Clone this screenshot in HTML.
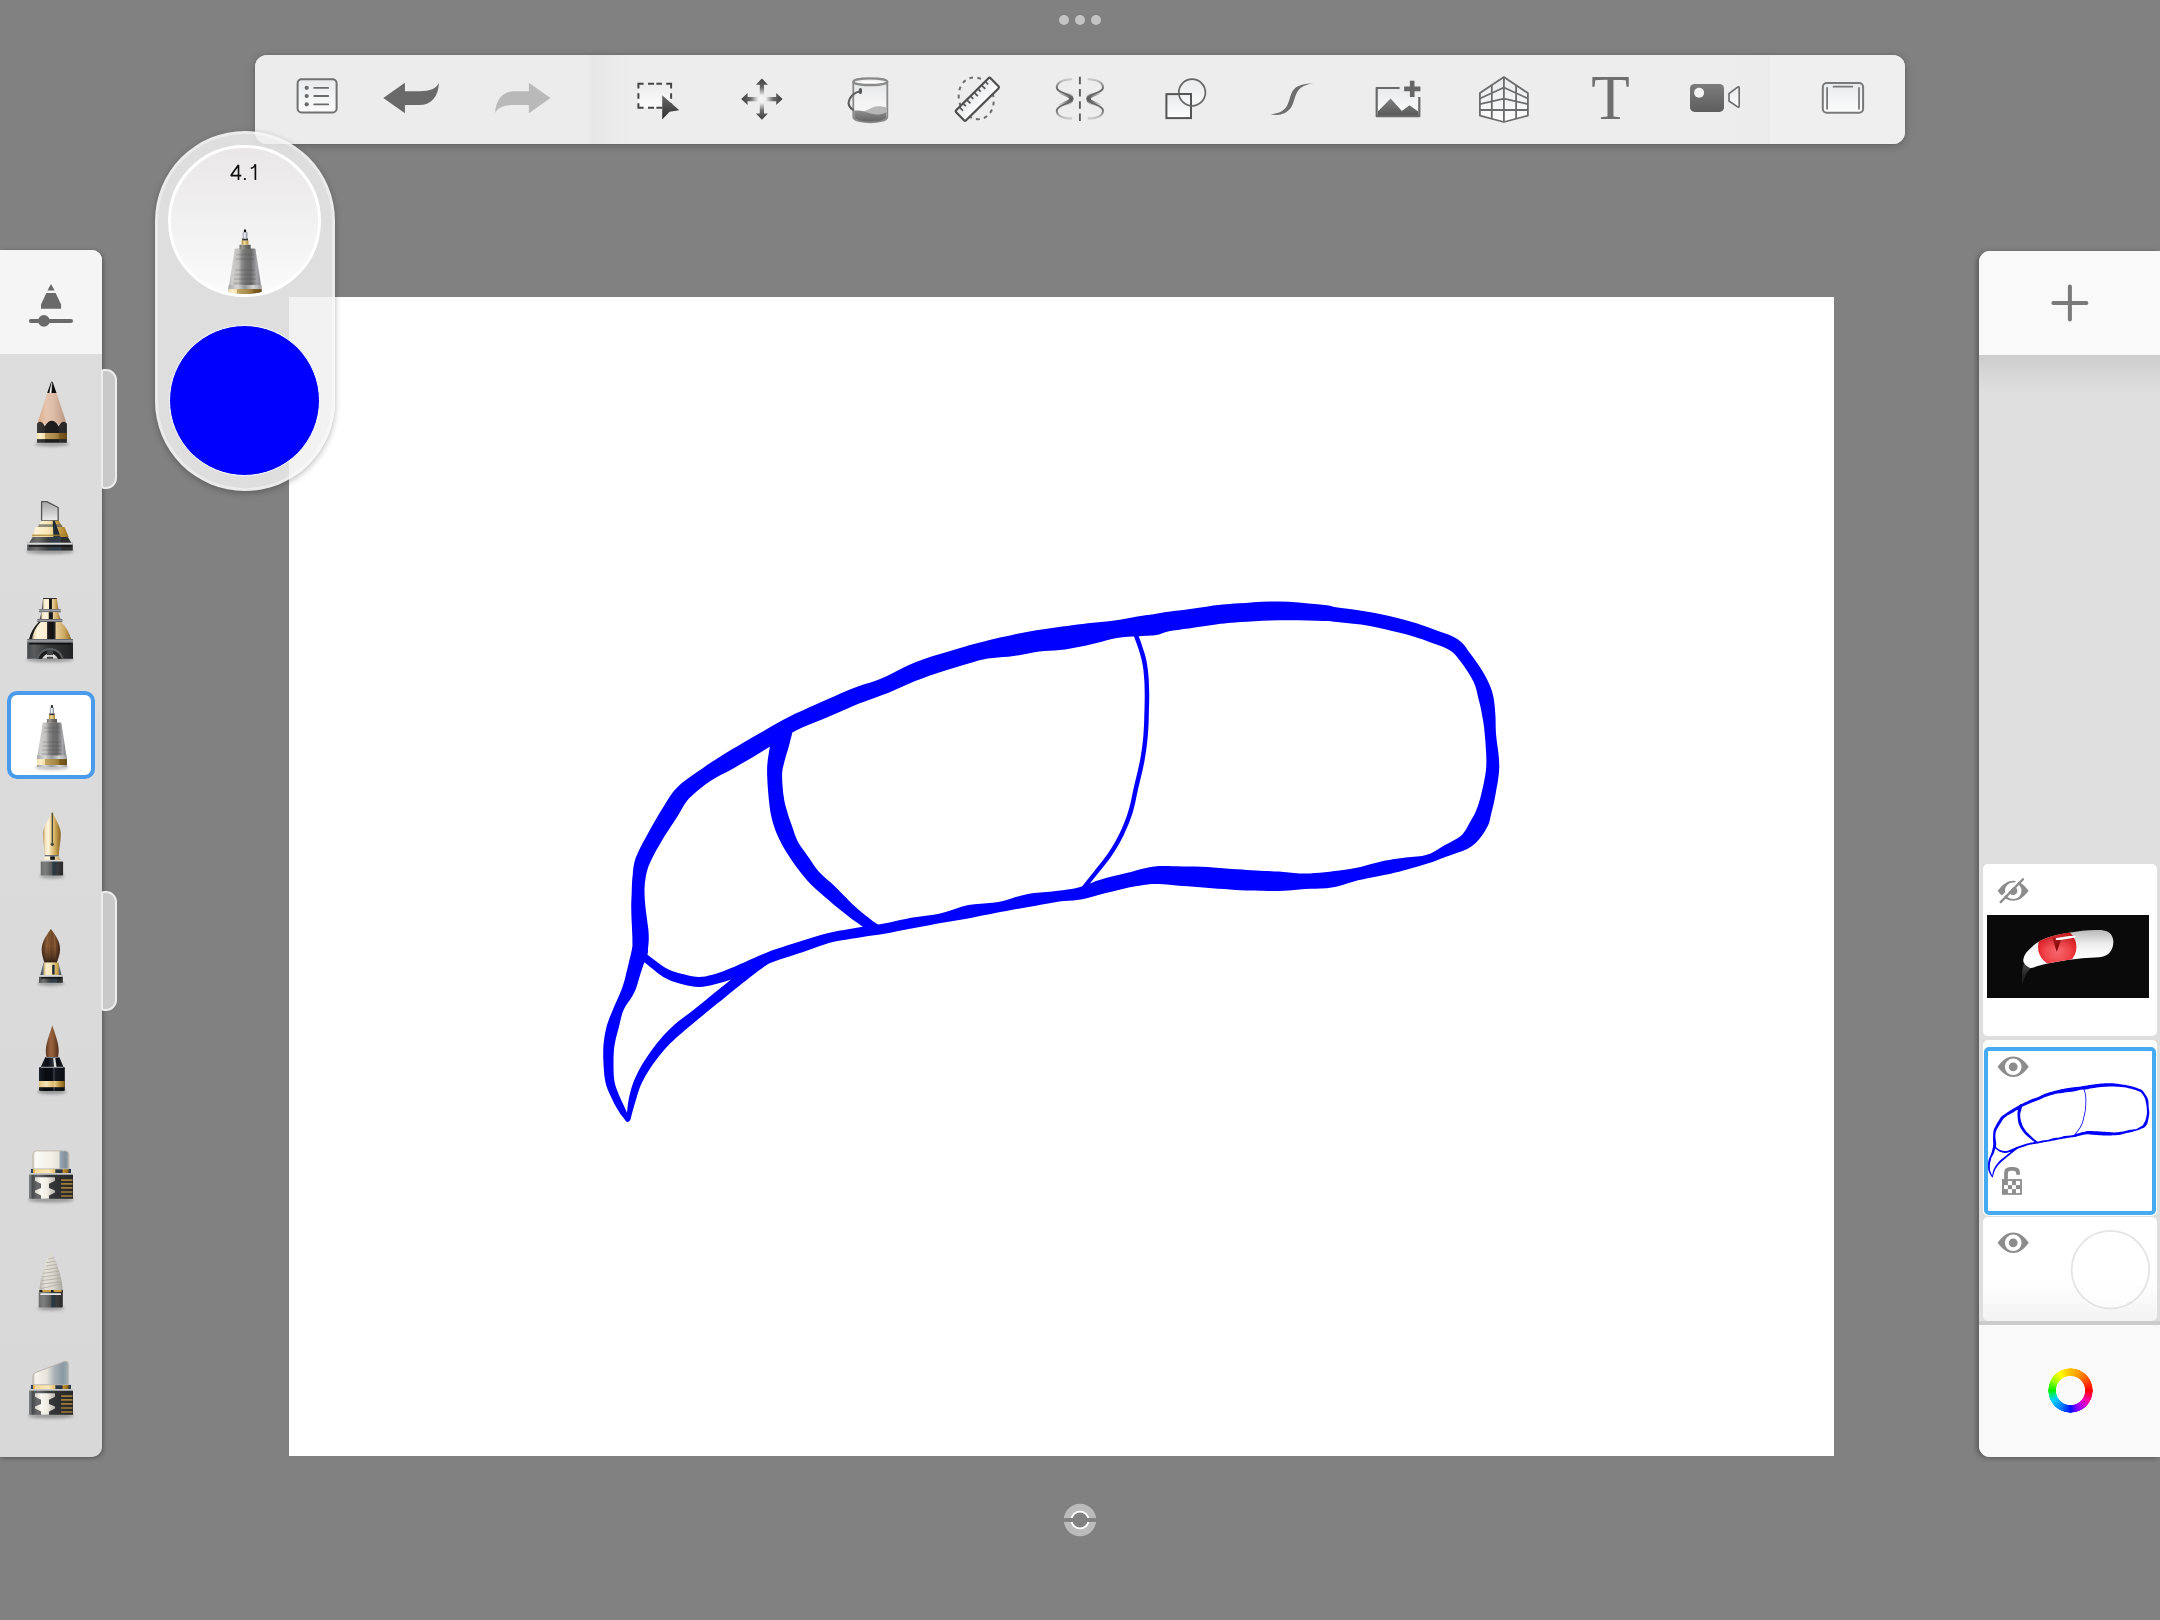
<!DOCTYPE html>
<html><head><meta charset="utf-8"><title>Sketchbook</title>
<style>
html,body{margin:0;padding:0;overflow:hidden}
body{width:2160px;height:1620px;background:#818181;position:relative;overflow:hidden;font-family:"Liberation Sans",sans-serif}
.abs{position:absolute}
#canvas{left:289.2px;top:296.8px;width:1545.3px;height:1159.2px;background:#fff}
#lp{left:0;top:250px;width:102.4px;height:1207px;background:#dcdcdc;border-radius:0 10px 10px 0;box-shadow:1px 1px 4px rgba(0,0,0,.35);background:linear-gradient(#dddddd,#d8d8d8)}
#lptop{left:0;top:250px;width:102.4px;height:104px;background:#f5f5f5;border-radius:0 10px 0 0}
.tab{left:101.3px;width:16px;height:120.2px;background:#c9c9c9;border:2px solid #ececec;border-radius:3px 11px 11px 3px;box-sizing:border-box}
#sel{left:7.1px;top:690.9px;width:88px;height:88.1px;box-sizing:border-box;border:4px solid #4a9bec;border-radius:10px;background:#fff}
#rp{left:1979px;top:250.5px;width:181px;height:1206.5px;background:#dedede;border-radius:11px 0 0 11px;box-shadow:-2px 1px 5px rgba(0,0,0,.32)}
#rptop{left:1979px;top:250.5px;width:181px;height:104px;background:#f9f9f9;border-radius:11px 0 0 0}
#rpgrad{left:1979px;top:354.5px;width:181px;height:36px;background:linear-gradient(#cdcdcd,#dedede)}
#rpbot{left:1979px;top:1325px;width:181px;height:132px;background:#f9f9f9;border-radius:0 0 0 11px}
#rpline{left:1979px;top:1321px;width:181px;height:4px;background:#cbcbcb}
.tile{left:1983px;width:174px;background:#fff;border-radius:5px}
#puck{left:154.8px;top:130.6px;width:180.4px;height:360.4px;border-radius:90.2px;background:rgba(240,240,240,.84);box-sizing:border-box;border:3px solid rgba(255,255,255,.4);box-shadow:0 2px 6px rgba(0,0,0,.28)}
#pc1{left:168.3px;top:144.5px;width:152.7px;height:152.7px;border-radius:50%;box-sizing:border-box;border:3px solid #fff;background:linear-gradient(#e9e7e7,#fbfbfb);overflow:hidden}
#pc2{left:169.4px;top:325.4px;width:151px;height:151px;border-radius:50%;box-sizing:border-box;border:1.5px solid #fff;background:#0000ff}
#ptxt{left:194.6px;top:160px;width:100px;text-align:center;font-size:20px;line-height:24px;color:transparent;letter-spacing:.3px}
#tb{left:255px;top:55px;width:1650px;height:88.7px;border-radius:12px;background:#ececec;box-shadow:0 2px 9px rgba(0,0,0,.22),0 0 2px rgba(0,0,0,.15);overflow:hidden}
#tbl{left:0;top:0;width:335px;height:100%;background:#ececec}
#tbm{left:335px;top:0;width:1180px;height:100%;background:linear-gradient(90deg,#e7e7e7 0,#ededed 42px,#ededed calc(100% - 45px),#ebebeb 100%)}
#tbr{left:1515px;top:0;width:135px;height:100%;background:#efefef}
#wheel{left:2047.5px;top:1368.4px;width:45px;height:45px;border-radius:50%;background:conic-gradient(from 90deg,#ff0000,#ff00a0 8.3%,#c400e0 13.9%,#8000ff 19.4%,#0010ff 25%,#0080ff 33.3%,#00d0ff 41.7%,#00e890 45.8%,#00f000 50%,#a0ff00 58.3%,#ffff00 66%,#ffc800 73.6%,#ff9000 83.3%,#ff4a00 91.7%,#ff0000);-webkit-mask:radial-gradient(circle,transparent 14.2px,#000 14.9px,#000 22px,transparent 22.6px);mask:radial-gradient(circle,transparent 14.2px,#000 14.9px,#000 22px,transparent 22.6px)}
svg{position:absolute;left:0;top:0}
</style></head><body>
<div id="canvas" class="abs"></div>
<svg width="2160" height="1620" viewBox="0 0 2160 1620"><g id="dr" fill="#0000ff"><path d="M647.5 953.3 L647.7 951.1 L648.1 947.8 L648.5 943.8 L648.8 939.4 L648.7 934.7 L648.4 929.8 L647.7 924.5 L647.0 919.1 L646.3 914.1 L645.7 909.6 L645.3 905.6 L645.0 901.9 L644.7 898.6 L644.6 895.3 L644.5 892.0 L644.5 888.8 L644.7 885.7 L644.9 882.8 L645.3 879.9 L645.7 877.0 L646.3 874.0 L646.9 871.4 L647.6 868.9 L648.5 866.3 L649.8 863.2 L651.5 859.4 L653.8 855.0 L656.3 850.3 L659.1 845.4 L661.8 840.7 L664.6 836.1 L667.6 831.4 L670.7 826.7 L673.8 822.1 L676.8 817.6 L679.5 813.1 L681.8 809.0 L683.9 805.3 L686.2 801.9 L688.9 798.6 L692.4 795.2 L696.6 791.5 L701.2 787.8 L706.0 784.1 L710.8 780.8 L715.3 778.0 L719.7 775.6 L724.2 773.2 L729.2 770.7 L734.5 767.7 L740.4 764.3 L746.6 760.7 L753.1 756.9 L759.6 753.0 L766.0 749.1 L772.3 745.2 L778.5 741.2 L784.6 737.3 L790.6 733.6 L796.6 730.3 L802.7 727.3 L808.8 724.7 L815.1 722.2 L821.4 719.8 L827.9 717.1 L834.3 714.3 L840.7 711.5 L847.0 708.7 L853.2 706.0 L859.1 703.6 L864.7 701.4 L870.2 699.4 L875.7 697.4 L881.6 695.3 L888.0 692.9 L894.7 690.1 L901.5 687.1 L908.3 684.1 L915.2 681.1 L922.2 678.4 L930.0 675.6 L938.4 672.8 L947.0 670.1 L955.2 667.5 L962.5 665.3 L968.6 663.4 L973.8 661.9 L978.4 660.6 L983.0 659.6 L987.7 658.6 L992.7 657.9 L997.8 657.4 L1003.0 657.1 L1008.3 656.7 L1013.7 656.0 L1019.1 655.2 L1024.3 654.2 L1029.4 653.2 L1034.5 652.2 L1039.4 651.5 L1044.3 651.0 L1049.3 650.7 L1054.5 650.4 L1059.8 650.0 L1065.2 649.4 L1070.6 648.6 L1075.9 647.6 L1081.1 646.6 L1086.3 645.5 L1091.4 644.3 L1096.6 643.1 L1101.7 641.7 L1106.8 640.3 L1111.9 639.0 L1116.9 638.0 L1122.2 637.3 L1127.7 636.8 L1133.2 636.5 L1138.3 636.2 L1142.6 635.9 L1145.9 635.8 L1148.4 635.7 L1150.7 635.6 L1153.3 635.5 L1156.2 635.0 L1159.1 634.4 L1161.6 633.6 L1163.8 632.8 L1166.0 632.0 L1169.0 631.3 L1173.1 630.6 L1178.1 629.9 L1183.5 629.1 L1189.1 628.4 L1194.6 627.6 L1200.0 626.8 L1205.4 626.0 L1210.7 625.2 L1215.7 624.4 L1220.4 623.8 L1224.5 623.4 L1227.9 623.0 L1231.3 622.7 L1235.4 622.4 L1240.6 622.1 L1247.2 621.7 L1254.6 621.2 L1262.6 620.8 L1270.8 620.4 L1279.0 620.2 L1287.9 620.2 L1297.8 620.3 L1307.7 620.5 L1316.5 620.8 L1323.4 621.0 L1327.3 621.1 L1328.5 621.0 L1328.8 621.0 L1330.6 621.3 L1334.1 621.7 L1339.5 622.2 L1346.1 622.9 L1353.4 623.7 L1361.0 624.6 L1368.4 625.8 L1375.9 627.2 L1384.0 629.0 L1392.1 630.9 L1399.8 632.8 L1406.7 634.6 L1412.6 636.2 L1418.0 637.9 L1422.9 639.5 L1427.5 641.2 L1432.1 642.9 L1436.6 644.5 L1440.8 646.0 L1444.4 647.4 L1447.5 648.9 L1450.1 650.4 L1452.3 652.0 L1454.2 653.7 L1456.1 655.8 L1458.2 658.4 L1460.6 661.5 L1463.2 665.1 L1466.1 669.2 L1468.9 673.5 L1471.4 677.7 L1473.4 681.5 L1474.9 685.0 L1476.0 688.3 L1476.8 691.6 L1477.6 695.0 L1478.4 698.5 L1479.3 702.0 L1480.2 705.6 L1481.0 709.3 L1481.7 713.1 L1482.4 716.9 L1483.1 720.4 L1483.6 723.9 L1484.1 727.4 L1484.5 731.4 L1484.9 736.1 L1485.4 741.6 L1485.8 747.8 L1486.2 754.1 L1486.4 760.3 L1486.3 765.8 L1485.9 771.0 L1485.1 776.0 L1484.2 781.1 L1483.2 786.0 L1482.1 790.6 L1481.1 794.9 L1480.1 798.8 L1479.0 802.5 L1477.9 805.9 L1476.7 809.1 L1475.6 811.9 L1474.6 814.1 L1473.6 815.9 L1472.5 817.7 L1471.2 820.0 L1469.5 823.0 L1467.8 826.3 L1466.0 829.5 L1464.1 832.3 L1462.1 834.7 L1459.8 836.7 L1456.7 838.8 L1453.0 840.8 L1449.0 842.9 L1445.0 845.0 L1441.2 847.3 L1437.8 849.5 L1434.3 851.5 L1430.7 853.4 L1426.7 854.8 L1422.1 855.9 L1416.8 856.6 L1411.2 857.1 L1405.8 857.6 L1400.8 858.2 L1396.5 858.8 L1392.8 859.3 L1389.2 859.9 L1385.4 860.6 L1381.1 861.5 L1376.3 862.7 L1371.2 864.0 L1365.9 865.5 L1360.6 866.9 L1355.3 868.1 L1350.1 869.0 L1344.8 869.8 L1339.6 870.5 L1334.5 871.1 L1329.6 871.7 L1324.7 872.2 L1319.8 872.7 L1314.8 873.1 L1309.7 873.4 L1304.6 873.6 L1299.4 873.4 L1294.1 873.0 L1288.8 872.5 L1283.8 872.0 L1279.1 871.6 L1275.0 871.4 L1271.4 871.2 L1267.9 871.1 L1264.4 870.9 L1260.4 870.7 L1256.1 870.5 L1251.6 870.2 L1246.9 869.9 L1242.0 869.6 L1237.0 869.3 L1231.5 868.9 L1225.7 868.4 L1219.6 867.9 L1213.5 867.4 L1207.4 867.1 L1201.2 866.8 L1195.0 866.6 L1188.8 866.5 L1182.9 866.4 L1177.5 866.3 L1172.6 866.2 L1168.1 866.0 L1163.7 866.0 L1159.0 866.0 L1154.2 866.4 L1149.4 867.2 L1144.8 868.2 L1140.4 869.3 L1135.9 870.6 L1131.0 871.9 L1125.4 873.2 L1119.3 874.7 L1112.9 876.2 L1106.8 877.8 L1101.1 879.4 L1096.0 881.1 L1091.3 882.9 L1087.2 884.5 L1083.2 886.0 L1079.3 887.3 L1075.4 888.2 L1071.5 888.9 L1067.3 889.6 L1062.8 890.2 L1057.8 890.8 L1052.3 891.4 L1046.4 891.9 L1040.2 892.4 L1033.9 893.0 L1027.7 894.0 L1021.6 895.4 L1015.7 897.1 L1009.9 899.0 L1004.1 900.7 L998.4 902.0 L992.6 902.8 L986.7 903.3 L980.7 903.7 L974.5 904.2 L968.4 905.1 L962.3 906.6 L956.3 908.4 L950.4 910.4 L944.7 912.2 L939.1 913.7 L933.5 914.8 L927.9 915.6 L922.3 916.2 L916.7 917.0 L911.1 917.8 L905.5 918.9 L900.1 920.1 L894.8 921.3 L889.5 922.5 L884.1 923.6 L878.5 924.5 L872.7 925.4 L866.9 926.3 L861.0 927.1 L855.2 928.1 L849.6 929.0 L844.1 929.9 L838.6 930.8 L833.0 931.9 L827.3 933.2 L821.5 934.7 L815.8 936.4 L810.1 938.2 L804.5 940.0 L799.0 941.8 L793.4 943.5 L787.6 945.3 L781.9 947.2 L776.3 949.0 L771.1 950.8 L766.4 952.7 L762.0 954.5 L757.9 956.2 L754.1 957.9 L750.4 959.6 L746.8 961.2 L743.5 962.7 L740.3 964.1 L737.2 965.5 L733.9 966.9 L730.5 968.3 L726.9 969.8 L723.2 971.3 L719.6 972.6 L716.0 973.7 L712.4 974.7 L708.9 975.6 L705.5 976.4 L702.2 976.8 L699.0 977.0 L695.7 976.8 L692.1 976.3 L688.4 975.5 L684.8 974.6 L681.3 973.7 L678.2 972.9 L675.4 972.1 L672.7 971.2 L670.2 970.2 L667.7 969.1 L665.2 967.7 L662.6 966.0 L660.0 964.2 L657.4 962.3 L655.0 960.5 L652.8 958.8 L650.5 957.0 L648.5 955.4 L646.8 953.9 L645.5 952.9 L640.5 959.1 L641.7 960.1 L643.5 961.5 L645.6 963.2 L647.9 965.1 L650.2 966.9 L652.4 968.7 L654.9 970.8 L657.6 972.9 L660.4 975.0 L663.3 976.9 L666.3 978.5 L669.2 979.9 L672.2 981.2 L675.4 982.3 L678.7 983.3 L682.3 984.3 L686.2 985.3 L690.3 986.1 L694.7 986.8 L699.0 987.0 L703.2 986.8 L707.3 986.1 L711.2 985.3 L715.0 984.3 L718.8 983.3 L722.6 982.3 L726.6 981.1 L730.5 979.8 L734.4 978.5 L738.1 977.1 L741.6 975.7 L744.9 974.2 L748.1 972.7 L751.3 971.2 L754.8 969.6 L758.5 968.0 L762.4 966.3 L766.3 964.6 L770.4 962.9 L774.9 961.2 L779.8 959.4 L785.2 957.7 L790.9 955.9 L796.7 954.1 L802.4 952.2 L808.0 950.3 L813.6 948.2 L819.0 946.2 L824.4 944.4 L829.7 942.8 L835.0 941.6 L840.3 940.6 L845.7 939.7 L851.2 938.8 L856.8 937.9 L862.5 937.0 L868.3 936.1 L874.2 935.3 L880.1 934.4 L885.9 933.4 L891.5 932.4 L897.0 931.3 L902.3 930.3 L907.6 929.2 L912.9 928.2 L918.3 927.2 L923.8 926.2 L929.4 925.2 L935.1 924.1 L940.9 923.1 L947.0 922.1 L953.0 921.0 L959.1 920.0 L965.0 918.9 L970.8 917.9 L976.5 916.8 L982.3 915.6 L988.2 914.4 L994.2 913.2 L1000.2 912.0 L1006.4 910.9 L1012.4 909.8 L1018.4 908.8 L1024.3 907.8 L1030.1 906.8 L1035.9 905.7 L1042.0 904.6 L1048.0 903.5 L1053.8 902.5 L1059.2 901.6 L1064.0 901.0 L1068.5 900.7 L1072.9 900.5 L1077.3 900.1 L1082.1 899.3 L1086.8 898.3 L1091.4 897.1 L1095.8 895.7 L1100.2 894.4 L1104.9 893.2 L1110.4 891.9 L1116.4 890.4 L1122.6 888.9 L1128.7 887.6 L1134.2 886.5 L1139.2 885.7 L1143.6 885.0 L1147.7 884.5 L1151.6 884.1 L1155.4 884.0 L1159.2 884.0 L1163.0 884.3 L1167.0 884.6 L1171.5 885.1 L1176.5 885.5 L1182.0 885.9 L1187.9 886.3 L1193.9 886.8 L1200.1 887.3 L1206.0 887.7 L1212.0 888.2 L1218.0 888.7 L1224.1 889.1 L1230.0 889.6 L1235.6 889.9 L1240.9 890.2 L1246.0 890.4 L1250.7 890.5 L1255.3 890.6 L1259.6 890.7 L1263.6 890.8 L1267.2 891.0 L1270.8 891.1 L1274.5 891.1 L1278.7 891.0 L1283.5 890.7 L1288.7 890.4 L1294.1 889.9 L1299.6 889.4 L1305.0 889.0 L1310.3 888.8 L1315.5 888.7 L1320.9 888.5 L1326.3 888.2 L1331.8 887.5 L1337.3 886.4 L1342.6 884.9 L1347.8 883.3 L1353.0 881.7 L1358.1 880.3 L1363.4 879.2 L1368.8 878.1 L1374.2 877.0 L1379.4 876.1 L1384.1 875.1 L1388.2 874.2 L1391.8 873.4 L1395.4 872.6 L1399.1 871.7 L1403.2 870.6 L1408.0 869.3 L1413.2 867.8 L1418.7 866.2 L1424.2 864.6 L1429.3 863.0 L1433.9 861.4 L1438.1 859.8 L1442.1 858.3 L1446.0 856.8 L1449.8 855.4 L1453.8 854.0 L1458.1 852.6 L1462.6 851.0 L1467.2 849.0 L1471.7 846.3 L1475.7 842.9 L1479.1 839.2 L1482.0 835.4 L1484.4 831.9 L1486.4 828.6 L1488.0 825.5 L1489.2 822.4 L1490.0 819.5 L1490.6 816.6 L1491.3 813.5 L1492.1 810.0 L1493.1 806.3 L1494.0 802.2 L1494.8 797.9 L1495.7 793.4 L1496.5 788.6 L1497.5 783.5 L1498.3 778.0 L1499.0 772.2 L1499.3 766.2 L1499.0 759.8 L1498.4 753.1 L1497.5 746.6 L1496.7 740.5 L1496.1 735.1 L1495.8 730.6 L1495.7 726.6 L1495.6 722.9 L1495.6 719.2 L1495.4 715.3 L1495.1 711.3 L1494.8 707.3 L1494.4 703.2 L1493.8 699.0 L1493.0 694.9 L1491.9 691.0 L1490.6 687.3 L1489.0 683.5 L1487.1 679.6 L1485.0 675.5 L1482.4 671.1 L1479.5 666.6 L1476.4 662.1 L1473.4 657.8 L1470.6 654.1 L1468.3 650.9 L1466.2 647.8 L1463.9 644.8 L1461.1 641.9 L1457.7 639.2 L1453.7 636.9 L1449.5 635.0 L1445.3 633.5 L1441.0 632.0 L1436.7 630.5 L1432.1 628.8 L1427.4 627.0 L1422.2 625.2 L1416.6 623.3 L1410.3 621.4 L1403.2 619.5 L1395.3 617.6 L1387.0 615.6 L1378.7 613.8 L1370.8 612.2 L1363.0 610.9 L1355.2 609.8 L1347.7 608.8 L1341.2 608.0 L1335.9 607.3 L1333.1 606.8 L1332.3 606.4 L1331.0 606.0 L1328.7 605.5 L1324.6 605.0 L1317.6 604.3 L1308.7 603.4 L1298.6 602.5 L1288.5 601.8 L1279.0 601.4 L1270.3 601.4 L1261.6 601.8 L1253.4 602.3 L1245.9 602.9 L1239.4 603.3 L1234.2 603.6 L1230.0 603.9 L1226.2 604.2 L1222.5 604.5 L1218.2 605.0 L1213.1 605.6 L1207.9 606.4 L1202.5 607.2 L1197.2 608.0 L1192.0 608.8 L1186.7 609.5 L1181.1 610.2 L1175.6 610.8 L1170.4 611.5 L1165.8 612.1 L1161.9 612.7 L1158.8 613.3 L1156.3 613.7 L1154.4 614.1 L1152.6 614.4 L1150.8 614.6 L1149.0 614.9 L1146.8 615.1 L1143.9 615.5 L1140.4 616.1 L1136.0 616.8 L1130.9 617.8 L1125.4 618.8 L1119.8 619.8 L1114.3 620.6 L1108.9 621.3 L1103.6 621.8 L1098.3 622.2 L1093.0 622.7 L1087.8 623.3 L1082.6 623.9 L1077.4 624.5 L1072.2 625.2 L1067.2 625.9 L1062.2 626.6 L1057.2 627.3 L1052.2 628.0 L1047.0 628.7 L1041.7 629.4 L1036.2 630.3 L1030.8 631.3 L1025.4 632.2 L1020.2 633.3 L1015.1 634.3 L1010.1 635.4 L1005.1 636.4 L1000.0 637.6 L994.8 638.8 L989.5 640.1 L984.1 641.4 L978.9 642.7 L974.1 644.0 L969.1 645.3 L963.7 646.9 L957.5 648.7 L950.2 650.9 L941.8 653.4 L933.0 656.1 L924.2 659.0 L916.0 662.0 L908.3 665.3 L901.2 668.8 L894.4 672.3 L888.1 675.6 L882.0 678.3 L876.2 680.6 L870.6 682.4 L865.0 684.1 L859.2 686.0 L853.1 688.2 L846.8 690.8 L840.4 693.5 L834.0 696.4 L827.6 699.3 L821.3 702.1 L815.2 704.8 L808.9 707.5 L802.6 710.4 L796.1 713.3 L789.6 716.5 L783.0 720.0 L776.5 723.6 L770.0 727.2 L763.7 730.9 L757.4 734.5 L750.9 738.2 L744.4 742.0 L737.9 745.9 L731.6 749.6 L725.9 753.1 L720.8 756.2 L716.1 759.2 L711.7 762.1 L707.1 765.1 L702.4 768.4 L697.4 771.8 L692.1 775.4 L686.9 779.2 L681.8 783.1 L677.1 787.4 L673.2 791.8 L670.0 796.2 L667.3 800.4 L664.9 804.5 L662.4 808.6 L659.6 813.1 L656.7 817.9 L653.8 822.9 L650.9 827.9 L648.2 832.9 L645.5 837.9 L642.7 843.0 L640.1 848.0 L637.8 853.0 L635.8 857.6 L634.5 861.8 L633.7 865.6 L633.2 869.0 L632.9 872.1 L632.7 875.2 L632.3 878.5 L632.1 881.8 L631.9 885.1 L631.8 888.4 L631.7 891.8 L631.6 895.2 L631.4 898.7 L631.3 902.4 L631.2 906.2 L631.3 910.4 L631.4 915.3 L631.6 920.5 L631.9 925.9 L632.1 930.9 L632.3 935.3 L632.4 939.3 L632.4 943.3 L632.5 947.0 L632.5 950.3 L632.5 952.7Z M779.0 724.4 L778.0 726.4 L776.6 729.2 L774.9 732.6 L773.3 736.2 L772.0 739.6 L771.0 742.9 L770.1 746.2 L769.4 749.6 L768.8 753.0 L768.3 756.3 L767.8 759.5 L767.5 762.6 L767.2 766.0 L767.1 769.6 L767.1 773.7 L767.3 778.4 L767.5 783.5 L767.9 788.8 L768.3 793.8 L768.7 798.2 L769.1 802.1 L769.5 805.5 L769.9 808.7 L770.4 811.9 L771.0 815.1 L771.8 818.5 L772.7 821.9 L773.7 825.3 L774.8 828.6 L776.0 831.9 L777.4 835.1 L778.8 838.3 L780.4 841.5 L782.2 844.9 L784.1 848.3 L786.1 851.7 L788.3 855.1 L790.5 858.5 L792.7 861.7 L795.0 864.9 L797.2 867.9 L799.5 871.1 L802.0 874.3 L804.7 877.6 L807.7 881.0 L811.0 884.4 L814.4 887.7 L818.0 890.9 L821.5 894.1 L825.2 897.3 L829.1 900.6 L833.3 904.2 L837.6 907.8 L842.0 911.3 L846.1 914.6 L850.2 917.7 L854.3 920.8 L858.3 923.6 L861.9 926.2 L864.9 928.3 L867.5 929.9 L869.7 931.2 L871.4 932.1 L872.7 932.7 L873.6 933.1 L878.4 924.9 L877.4 924.3 L876.3 923.5 L874.9 922.6 L873.2 921.4 L871.1 919.7 L868.3 917.5 L864.9 914.9 L861.3 911.9 L857.5 908.7 L853.9 905.4 L850.2 901.9 L846.4 898.1 L842.6 894.2 L838.7 890.3 L835.0 886.5 L831.3 883.1 L827.7 879.9 L824.3 876.9 L821.2 874.0 L818.5 871.2 L816.1 868.3 L813.9 865.3 L811.9 862.3 L809.8 859.1 L807.6 855.9 L805.4 852.8 L803.2 849.7 L801.0 846.7 L799.1 843.8 L797.5 840.9 L796.2 838.0 L795.0 835.1 L794.0 832.1 L793.0 829.0 L792.0 825.9 L790.9 822.9 L789.8 819.9 L788.8 817.0 L787.9 814.0 L787.0 811.1 L786.2 808.3 L785.5 805.7 L784.8 803.0 L784.2 800.0 L783.7 796.6 L783.1 792.3 L782.7 787.5 L782.3 782.6 L782.1 777.9 L782.1 773.9 L782.4 770.6 L782.8 767.9 L783.5 765.3 L784.2 762.6 L784.9 759.7 L785.7 756.7 L786.6 753.8 L787.5 750.9 L788.4 747.9 L789.2 745.0 L790.0 741.8 L790.9 738.3 L791.8 734.8 L792.5 731.7 L793.0 729.6Z M1133.9 635.7 L1135.0 639.2 L1136.8 644.0 L1138.7 649.6 L1140.4 655.3 L1141.8 660.5 L1142.7 665.2 L1143.4 669.7 L1143.8 674.3 L1144.2 679.0 L1144.5 683.8 L1144.6 688.8 L1144.7 693.9 L1144.7 699.1 L1144.6 704.3 L1144.5 709.6 L1144.3 714.7 L1144.2 719.9 L1144.0 725.1 L1143.7 730.3 L1143.4 735.4 L1142.9 740.5 L1142.3 745.7 L1141.6 750.8 L1140.8 755.9 L1139.9 761.1 L1138.8 766.3 L1137.6 771.7 L1136.3 777.0 L1135.0 782.3 L1133.8 787.5 L1132.7 792.6 L1131.7 797.5 L1130.7 802.3 L1129.5 807.0 L1128.2 811.5 L1126.8 816.1 L1125.1 820.6 L1123.3 825.0 L1121.5 829.3 L1119.5 833.4 L1117.5 837.4 L1115.5 841.3 L1113.3 845.0 L1111.0 848.7 L1108.6 852.5 L1105.9 856.3 L1102.9 860.3 L1099.8 864.3 L1096.7 868.1 L1093.9 871.7 L1091.2 875.1 L1088.4 878.6 L1085.8 881.8 L1083.6 884.5 L1082.0 886.4 L1085.4 889.2 L1086.9 887.2 L1089.1 884.5 L1091.7 881.3 L1094.5 877.8 L1097.3 874.3 L1100.1 870.8 L1103.2 867.0 L1106.3 863.0 L1109.4 858.9 L1112.2 854.9 L1114.8 851.1 L1117.1 847.2 L1119.3 843.4 L1121.4 839.5 L1123.5 835.4 L1125.5 831.1 L1127.4 826.7 L1129.3 822.2 L1131.0 817.6 L1132.6 812.9 L1133.9 808.1 L1135.1 803.3 L1136.1 798.4 L1137.1 793.5 L1138.2 788.5 L1139.4 783.4 L1140.7 778.1 L1142.0 772.7 L1143.2 767.3 L1144.3 761.9 L1145.2 756.6 L1146.0 751.4 L1146.7 746.2 L1147.3 741.0 L1147.8 735.8 L1148.2 730.5 L1148.5 725.3 L1148.7 720.1 L1148.8 714.8 L1148.9 709.6 L1149.1 704.4 L1149.2 699.2 L1149.2 693.9 L1149.1 688.7 L1148.9 683.6 L1148.7 678.7 L1148.3 673.9 L1147.8 669.2 L1147.1 664.4 L1146.2 659.5 L1144.8 654.1 L1142.9 648.2 L1141.0 642.5 L1139.3 637.7 L1138.1 634.3Z M632.3 947.8 L631.6 950.7 L630.7 954.9 L629.5 959.7 L628.4 964.6 L627.3 969.1 L626.3 973.1 L625.4 976.9 L624.5 980.4 L623.5 983.8 L622.5 987.1 L621.2 990.5 L619.7 994.1 L618.0 998.0 L616.2 1002.0 L614.4 1006.0 L612.8 1009.9 L611.2 1013.8 L609.6 1017.6 L608.2 1021.4 L607.0 1025.1 L606.0 1028.9 L605.2 1032.7 L604.5 1036.6 L604.0 1040.4 L603.5 1044.4 L603.3 1048.3 L603.2 1052.3 L603.2 1056.2 L603.3 1060.0 L603.5 1063.8 L603.7 1067.6 L604.0 1071.5 L604.3 1075.3 L604.9 1079.2 L605.6 1082.9 L606.6 1086.5 L607.8 1089.8 L609.2 1092.9 L610.5 1095.8 L611.8 1098.6 L613.2 1101.4 L614.6 1104.2 L616.1 1106.9 L617.5 1109.3 L618.9 1111.6 L620.4 1113.9 L622.0 1116.1 L623.6 1118.1 L624.9 1119.8 L625.9 1121.0 L629.3 1119.0 L628.8 1117.6 L628.0 1115.6 L627.1 1113.3 L626.1 1110.8 L625.1 1108.4 L624.0 1105.9 L622.8 1103.4 L621.5 1100.8 L620.3 1098.1 L619.2 1095.4 L618.0 1092.6 L616.9 1089.7 L615.9 1086.9 L615.0 1084.0 L614.4 1081.1 L614.0 1077.9 L613.7 1074.5 L613.6 1070.9 L613.5 1067.3 L613.5 1063.6 L613.5 1059.9 L613.6 1056.3 L613.8 1052.7 L614.0 1049.1 L614.5 1045.6 L615.1 1042.2 L615.8 1038.8 L616.7 1035.3 L617.6 1031.8 L618.6 1028.3 L619.5 1024.6 L620.3 1020.9 L621.2 1017.2 L622.2 1013.5 L623.6 1010.0 L625.3 1006.6 L627.5 1003.3 L630.0 999.8 L632.4 996.1 L634.5 992.1 L636.2 988.1 L637.4 984.2 L638.5 980.4 L639.6 976.7 L640.7 972.9 L642.2 968.6 L643.8 963.8 L645.4 959.1 L646.7 955.0 L647.7 952.2Z M630.5 1119.3 L631.1 1116.9 L632.0 1113.5 L633.1 1109.5 L634.3 1105.3 L635.4 1101.5 L636.5 1097.9 L637.5 1094.3 L638.7 1090.8 L639.9 1087.2 L641.5 1083.6 L643.3 1079.9 L645.4 1076.0 L647.7 1072.2 L650.2 1068.3 L652.7 1064.5 L655.5 1060.7 L658.4 1056.9 L661.4 1053.2 L664.5 1049.6 L667.5 1046.3 L670.3 1043.3 L673.1 1040.7 L675.9 1038.1 L678.8 1035.5 L682.1 1032.7 L685.7 1029.5 L689.7 1026.2 L693.9 1022.7 L698.1 1019.2 L702.1 1015.9 L705.9 1012.8 L709.6 1009.7 L713.3 1006.8 L716.9 1003.8 L720.6 1000.9 L724.3 997.9 L728.1 994.8 L731.8 991.7 L735.5 988.8 L739.1 985.9 L742.6 983.1 L746.1 980.4 L749.4 977.8 L752.6 975.3 L755.6 973.0 L758.5 970.8 L761.4 968.7 L764.0 966.8 L766.3 965.2 L767.9 964.1 L762.1 955.9 L760.5 957.1 L758.2 958.7 L755.5 960.6 L752.6 962.8 L749.6 965.0 L746.5 967.4 L743.3 969.9 L739.9 972.5 L736.4 975.3 L732.9 978.1 L729.3 981.0 L725.6 984.0 L721.8 987.0 L718.0 990.1 L714.2 993.1 L710.6 996.1 L707.0 999.1 L703.4 1002.0 L699.7 1005.1 L695.9 1008.1 L691.8 1011.2 L687.5 1014.5 L683.1 1017.8 L678.8 1021.1 L674.9 1024.3 L671.5 1027.4 L668.5 1030.3 L665.6 1033.3 L662.8 1036.3 L659.9 1039.7 L656.9 1043.3 L653.9 1047.2 L650.9 1051.3 L648.0 1055.4 L645.3 1059.5 L642.7 1063.6 L640.3 1067.8 L638.0 1072.0 L636.0 1076.3 L634.1 1080.4 L632.6 1084.5 L631.3 1088.4 L630.3 1092.3 L629.4 1096.1 L628.6 1099.9 L627.9 1104.0 L627.4 1108.4 L627.0 1112.6 L626.8 1116.1 L626.5 1118.7Z"/><circle cx="640.0" cy="953.0" r="7.5"/><circle cx="643.0" cy="956.0" r="4.0"/><circle cx="786.0" cy="727.0" r="7.5"/><circle cx="876.0" cy="929.0" r="4.8"/><circle cx="1136.0" cy="635.0" r="2.2"/><circle cx="1083.7" cy="887.8" r="2.1"/><circle cx="640.0" cy="950.0" r="8.0"/><circle cx="627.6" cy="1120.0" r="2.0"/><circle cx="628.5" cy="1119.0" r="2.0"/><circle cx="765.0" cy="960.0" r="5.0"/></g></svg>
<div id="lp" class="abs"></div><div id="lptop" class="abs"></div>
<div class="abs tab" style="top:368.9px"></div><div class="abs tab" style="top:890.9px"></div>
<div id="sel" class="abs"></div>
<div id="rp" class="abs"></div><div id="rptop" class="abs"></div><div id="rpgrad" class="abs"></div><div id="rpline" class="abs"></div><div id="rpbot" class="abs"></div>
<div class="abs tile" style="top:864px;height:172px"></div>
<div class="abs tile" style="top:1040px;height:176px"></div>
<div class="abs" style="left:1984px;top:1047px;width:172px;height:168px;box-sizing:border-box;border:4px solid #45aaf2;border-radius:5px;background:#fff"></div>
<div class="abs tile" style="top:1217px;height:104px;background:linear-gradient(#fff 60%,#f3f3f3)"></div>
<div class="abs" style="left:1987px;top:914.8px;width:162px;height:83.5px;background:#0a0a0a"></div>
<div id="tb" class="abs"><div id="tbl" class="abs"></div><div id="tbm" class="abs"></div><div id="tbr" class="abs"></div></div>
<div id="wheel" class="abs"></div>
<div id="puck" class="abs"></div><div id="pc1" class="abs"></div><div id="pc2" class="abs"></div><div id="ptxt" class="abs">4.1</div>
<svg id="ic" width="2160" height="1620" viewBox="0 0 2160 1620">
<defs><linearGradient id="gLight" x1="0" y1="0" x2="0" y2="1"><stop offset="0" stop-color="#e8eaec"/><stop offset="1" stop-color="#fdfdfd"/></linearGradient>
<linearGradient id="gDark" x1="0" y1="0" x2="0" y2="1"><stop offset="0" stop-color="#6a6a6a"/><stop offset="1" stop-color="#2e2e2e"/></linearGradient>
<linearGradient id="gDark2" x1="0" y1="0" x2="0" y2="1"><stop offset="0" stop-color="#808080"/><stop offset="1" stop-color="#5a5a5a"/></linearGradient>
<radialGradient id="gMove" gradientUnits="userSpaceOnUse" cx="761.9" cy="99.1" r="21"><stop offset="0" stop-color="#f4f4f4"/><stop offset=".18" stop-color="#f0f0f0"/><stop offset=".55" stop-color="#6a6a6a"/><stop offset="1" stop-color="#3c3c3c"/></radialGradient>

<linearGradient id="gBucket" x1="0" y1="0" x2="0" y2="1"><stop offset="0" stop-color="#e2e4e6"/><stop offset=".5" stop-color="#f5f5f5"/><stop offset="1" stop-color="#f4f4f4"/></linearGradient>
<linearGradient id="gSym" gradientUnits="userSpaceOnUse" x1="0" y1="79" x2="0" y2="119"><stop offset="0" stop-color="#6a6a6a" stop-opacity=".25"/><stop offset=".25" stop-color="#6a6a6a"/><stop offset=".75" stop-color="#6a6a6a"/><stop offset="1" stop-color="#6a6a6a" stop-opacity=".25"/></linearGradient>
<linearGradient id="gCam" x1="0" y1="0" x2="0" y2="1"><stop offset="0" stop-color="#7c7c7c"/><stop offset="1" stop-color="#5e5e5e"/></linearGradient>
<linearGradient id="gSym2" gradientUnits="userSpaceOnUse" x1="0" y1="88" x2="0" y2="110"><stop offset="0" stop-color="#626262" stop-opacity="0"/><stop offset=".2" stop-color="#626262" stop-opacity="0"/><stop offset=".4" stop-color="#606060" stop-opacity=".85"/><stop offset=".5" stop-color="#5c5c5c"/><stop offset=".6" stop-color="#606060" stop-opacity=".85"/><stop offset=".8" stop-color="#626262" stop-opacity="0"/><stop offset="1" stop-color="#626262" stop-opacity="0"/></linearGradient>
<filter id="blur2" x="-30%" y="-200%" width="160%" height="500%"><feGaussianBlur stdDeviation="1.6"/></filter>
<linearGradient id="gWood" x1="0" y1="0" x2="1" y2="0"><stop offset="0" stop-color="#d8a684"/><stop offset=".3" stop-color="#e6c4ae"/><stop offset=".55" stop-color="#dcbca8"/><stop offset=".8" stop-color="#c8a692"/><stop offset="1" stop-color="#b08e7a"/></linearGradient>
<linearGradient id="gLead" x1="0" y1="0" x2="1" y2="0"><stop offset="0" stop-color="#111"/><stop offset=".3" stop-color="#222"/><stop offset=".42" stop-color="#f2f2f2"/><stop offset=".56" stop-color="#999"/><stop offset=".62" stop-color="#0a0a0a"/><stop offset="1" stop-color="#111"/></linearGradient>
<linearGradient id="gBlk3" x1="0" y1="0" x2="1" y2="0"><stop offset="0" stop-color="#3a3a3a"/><stop offset=".26" stop-color="#2c2c2c"/><stop offset=".27" stop-color="#1f1f1f"/><stop offset=".73" stop-color="#1c1c1c"/><stop offset=".74" stop-color="#2a2a2a"/><stop offset="1" stop-color="#262626"/></linearGradient>
<linearGradient id="gGold3" x1="0" y1="0" x2="1" y2="0"><stop offset="0" stop-color="#f3e0ae"/><stop offset=".12" stop-color="#fdf0cc"/><stop offset=".26" stop-color="#f3dca4"/><stop offset=".27" stop-color="#c2a462"/><stop offset=".6" stop-color="#a88a48"/><stop offset=".73" stop-color="#9a7636"/><stop offset=".74" stop-color="#80601f"/><stop offset="1" stop-color="#6a4a14"/></linearGradient>
<linearGradient id="gNib" x1="0" y1="0" x2="0" y2="1"><stop offset="0" stop-color="#a6a6a6"/><stop offset=".5" stop-color="#c9c9c9"/><stop offset="1" stop-color="#ececec"/></linearGradient>
<linearGradient id="gGoldM" x1="0" y1="0" x2="1" y2="0"><stop offset="0" stop-color="#e9cf94"/><stop offset=".1" stop-color="#fdf2d4"/><stop offset=".45" stop-color="#f9e6b8"/><stop offset=".6" stop-color="#e8cc8a"/><stop offset=".75" stop-color="#c9a04a"/><stop offset=".9" stop-color="#b0832e"/><stop offset="1" stop-color="#8a6520"/></linearGradient>
<linearGradient id="gGrayH" x1="0" y1="0" x2="1" y2="0"><stop offset="0" stop-color="#4e5052"/><stop offset=".2" stop-color="#6e6e6e"/><stop offset=".45" stop-color="#3a3c3e"/><stop offset=".57" stop-color="#2f3c48"/><stop offset=".74" stop-color="#323e4a"/><stop offset=".76" stop-color="#2a2c2e"/><stop offset="1" stop-color="#303030"/></linearGradient>
<linearGradient id="gGoldA" x1="0" y1="0" x2="1" y2="0"><stop offset="0" stop-color="#3a3a3a"/><stop offset=".06" stop-color="#6a6a6a"/><stop offset=".12" stop-color="#f0dfb8"/><stop offset=".2" stop-color="#fdf4dc"/><stop offset=".42" stop-color="#fbeed0"/><stop offset=".44" stop-color="#1c1c1c"/><stop offset=".56" stop-color="#111"/><stop offset=".62" stop-color="#2a2a2a"/><stop offset=".64" stop-color="#e8d09a"/><stop offset=".85" stop-color="#caa65e"/><stop offset=".96" stop-color="#a67c34"/><stop offset="1" stop-color="#4a4a4a"/></linearGradient>
<linearGradient id="gSilverV" x1="0" y1="0" x2="0" y2="1"><stop offset="0" stop-color="#45484c"/><stop offset=".45" stop-color="#a8aaae"/><stop offset="1" stop-color="#3e4044"/></linearGradient>
<linearGradient id="gBaseA" x1="0" y1="0" x2="1" y2="0"><stop offset="0" stop-color="#45474a"/><stop offset=".15" stop-color="#5a5c5e"/><stop offset=".45" stop-color="#36383a"/><stop offset="1" stop-color="#232325"/></linearGradient>
<clipPath id="cAir"><rect x="27.2" y="645" width="45.8" height="13.8"/></clipPath>
<linearGradient id="gPenBody" x1="0" y1="0" x2="1" y2="0"><stop offset="0" stop-color="#a8a8aa"/><stop offset=".1" stop-color="#cfcfcf"/><stop offset=".3" stop-color="#c2c0be"/><stop offset=".4" stop-color="#8c8c8c"/><stop offset=".52" stop-color="#727272"/><stop offset=".68" stop-color="#6a6a6a"/><stop offset=".77" stop-color="#8a8a8c"/><stop offset=".86" stop-color="#a8a8ac"/><stop offset=".93" stop-color="#8c8c90"/><stop offset="1" stop-color="#a2a2a6"/></linearGradient>
<linearGradient id="gSilverH" x1="0" y1="0" x2="1" y2="0"><stop offset="0" stop-color="#a4a4a4"/><stop offset=".27" stop-color="#d8d8da"/><stop offset=".5" stop-color="#9c9c9c"/><stop offset=".74" stop-color="#dcdcdc"/><stop offset="1" stop-color="#a0a0a0"/></linearGradient>
<linearGradient id="gStep" x1="0" y1="0" x2="1" y2="0"><stop offset="0" stop-color="#777"/><stop offset=".25" stop-color="#9a9890"/><stop offset=".6" stop-color="#6c6a66"/><stop offset="1" stop-color="#555"/></linearGradient>
<linearGradient id="gGoldS" x1="0" y1="0" x2="1" y2="0"><stop offset="0" stop-color="#b08a36"/><stop offset=".4" stop-color="#f4dc9c"/><stop offset="1" stop-color="#b08a36"/></linearGradient>
<linearGradient id="gTube" x1="0" y1="0" x2="1" y2="0"><stop offset="0" stop-color="#8088a0"/><stop offset=".45" stop-color="#fff"/><stop offset="1" stop-color="#70788c"/></linearGradient>
<linearGradient id="gGoldN" x1="0" y1="0" x2="1" y2="0"><stop offset="0" stop-color="#b89a5c"/><stop offset=".14" stop-color="#f4e4bc"/><stop offset=".3" stop-color="#fff6e0"/><stop offset=".48" stop-color="#e9cf90"/><stop offset=".7" stop-color="#cba858"/><stop offset=".88" stop-color="#a27a30"/><stop offset="1" stop-color="#8a6420"/></linearGradient>
<linearGradient id="gBaseF" x1="0" y1="0" x2="1" y2="0"><stop offset="0" stop-color="#6c6e6e"/><stop offset=".2" stop-color="#7e7e7e"/><stop offset=".5" stop-color="#585a5a"/><stop offset=".54" stop-color="#2c3a44"/><stop offset=".68" stop-color="#2a3640"/><stop offset=".72" stop-color="#3c3c3c"/><stop offset="1" stop-color="#2a2a2a"/></linearGradient>
<linearGradient id="gBristle" x1="0" y1="0" x2="1" y2="0"><stop offset="0" stop-color="#4a2e1c"/><stop offset=".3" stop-color="#8a5e38"/><stop offset=".5" stop-color="#6e4628"/><stop offset=".7" stop-color="#7e5432"/><stop offset="1" stop-color="#3c2416"/></linearGradient>
<linearGradient id="gBristleV" x1="0" y1="0" x2="0" y2="1"><stop offset="0" stop-color="#7a5230" stop-opacity=".2"/><stop offset=".5" stop-color="#4a2e1c" stop-opacity="0"/><stop offset="1" stop-color="#1e120c" stop-opacity=".75"/></linearGradient>
<linearGradient id="gFerrule" x1="0" y1="0" x2="1" y2="0"><stop offset="0" stop-color="#3a4650"/><stop offset=".12" stop-color="#5c6c7a"/><stop offset=".2" stop-color="#e4c98c"/><stop offset=".3" stop-color="#fdf0d0"/><stop offset=".55" stop-color="#f6e0ac"/><stop offset=".72" stop-color="#d8b466"/><stop offset=".84" stop-color="#c29a42"/><stop offset=".9" stop-color="#5c6c7a"/><stop offset="1" stop-color="#33404a"/></linearGradient>
<linearGradient id="gBristle2" x1="0" y1="0" x2="1" y2="0"><stop offset="0" stop-color="#5e3620"/><stop offset=".35" stop-color="#99643e"/><stop offset=".6" stop-color="#8a5834"/><stop offset="1" stop-color="#4e2c1a"/></linearGradient>
<linearGradient id="gBlkCone" x1="0" y1="0" x2="1" y2="0"><stop offset="0" stop-color="#1c2028"/><stop offset=".3" stop-color="#0c0e14"/><stop offset=".52" stop-color="#2a2e36"/><stop offset=".7" stop-color="#0a0c12"/><stop offset="1" stop-color="#1a1c22"/></linearGradient>
<linearGradient id="gBlkBody" x1="0" y1="0" x2="1" y2="0"><stop offset="0" stop-color="#1c2028"/><stop offset=".25" stop-color="#080a10"/><stop offset=".52" stop-color="#0c0e16"/><stop offset=".58" stop-color="#3c4048"/><stop offset=".64" stop-color="#14161e"/><stop offset="1" stop-color="#0a0c12"/></linearGradient>
<linearGradient id="gGoldB" x1="0" y1="0" x2="1" y2="0"><stop offset="0" stop-color="#e2c684"/><stop offset=".3" stop-color="#f6e4b4"/><stop offset=".55" stop-color="#d9b868"/><stop offset=".6" stop-color="#e6cc8c"/><stop offset=".8" stop-color="#b8903c"/><stop offset="1" stop-color="#7e5c1c"/></linearGradient>
<linearGradient id="gGoldE" x1="0" y1="0" x2="1" y2="0"><stop offset="0" stop-color="#33445a"/><stop offset=".05" stop-color="#3a4a5e"/><stop offset=".06" stop-color="#d9a63c"/><stop offset=".12" stop-color="#f6dc9c"/><stop offset=".45" stop-color="#fbe8b8"/><stop offset=".6" stop-color="#e8c06c"/><stop offset=".62" stop-color="#2c3a48"/><stop offset=".78" stop-color="#26323e"/><stop offset=".8" stop-color="#c8922c"/><stop offset=".93" stop-color="#8a5e14"/><stop offset=".95" stop-color="#2a3846"/><stop offset="1" stop-color="#2a3846"/></linearGradient>
<linearGradient id="gBaseE" x1="0" y1="0" x2="1" y2="0"><stop offset="0" stop-color="#5a5c5e"/><stop offset=".04" stop-color="#808284"/><stop offset=".06" stop-color="#46484a"/><stop offset=".2" stop-color="#6a6a6c"/><stop offset=".45" stop-color="#3a3c3e"/><stop offset=".6" stop-color="#303234"/><stop offset="1" stop-color="#28282a"/></linearGradient>
<linearGradient id="gIvory" x1="0" y1="0" x2="1" y2="0"><stop offset="0" stop-color="#d4d2ca"/><stop offset=".3" stop-color="#faf8f2"/><stop offset=".6" stop-color="#f0ede4"/><stop offset="1" stop-color="#b8b6ae"/></linearGradient>
<linearGradient id="gErTop" x1="0" y1="0" x2="1" y2="0"><stop offset="0" stop-color="#cfcbc0"/><stop offset=".07" stop-color="#fbfaf6"/><stop offset=".5" stop-color="#f3f0e8"/><stop offset=".72" stop-color="#e8e4da"/><stop offset=".76" stop-color="#9aa6b0"/><stop offset=".92" stop-color="#7e8e9a"/><stop offset="1" stop-color="#b0b4b6"/></linearGradient>
<linearGradient id="gSmudge" x1="0" y1="0" x2="1" y2="0"><stop offset="0" stop-color="#b4b2aa"/><stop offset=".25" stop-color="#e4e2da"/><stop offset=".6" stop-color="#d8d5cc"/><stop offset="1" stop-color="#a8a69e"/></linearGradient>
<linearGradient id="gChisel" x1="0" y1="0" x2="1" y2="0"><stop offset="0" stop-color="#c9c6bc"/><stop offset=".08" stop-color="#f6f4ee"/><stop offset=".4" stop-color="#e6e3da"/><stop offset=".62" stop-color="#a8b0b6"/><stop offset=".85" stop-color="#8a98a2"/><stop offset="1" stop-color="#a4aeb4"/></linearGradient>
<clipPath id="cThumb1"><rect x="1987" y="914.8" width="162" height="83.5"/></clipPath>
<clipPath id="cThumb2"><rect x="1988" y="1051" width="164" height="160"/></clipPath>
<clipPath id="cEyeW"><path d="M2023.3 959.4 C2024.2 955.5 2025.8 953 2028.3 950.6 C2031 947.6 2034 944.5 2037.8 942.2 C2041.2 940 2044.8 938.4 2048.9 937.2 C2054 935.7 2059.8 934.4 2065.6 933.3 C2071 932.3 2076.6 931.5 2082.2 930.8 C2087.6 930.2 2093.4 929.8 2098.9 930 C2102.4 930.1 2105.6 930.4 2107.8 931.7 C2110.6 933.2 2112.2 935.6 2112.8 938.3 C2113.3 939.8 2113.5 941.3 2113.3 942.8 C2113.2 945.2 2112.7 947.4 2111.7 949.4 C2110.6 951.6 2109 953.6 2106.7 955 C2104.5 956.3 2101.8 956.9 2098.9 957.2 C2093.4 957.7 2087.8 957.9 2082.2 958.3 C2076.6 958.8 2071 959.5 2065.6 960.3 C2059.9 961.2 2054.4 962.2 2048.9 963.3 C2045.1 964.1 2041.4 965 2037.8 966.1 C2035.5 966.8 2033.3 967.8 2031.1 968.1 C2029.4 968.3 2027.9 967.3 2026.7 966.1 C2025.3 964.8 2024.1 963.6 2023.6 962.2 C2023.3 961.3 2023.2 960.3 2023.3 959.4 Z"/></clipPath>
<filter id="blur05"><feGaussianBlur stdDeviation=".6"/></filter>
<filter id="blur03"><feGaussianBlur stdDeviation=".35"/></filter>
<linearGradient id="gEyeW" x1="0" y1="0" x2="0" y2="1"><stop offset="0" stop-color="#b8b8b8"/><stop offset=".35" stop-color="#ececec"/><stop offset=".7" stop-color="#ffffff"/></linearGradient>
<radialGradient id="gIris" cx=".5" cy=".62" r=".55"><stop offset="0" stop-color="#f4686e"/><stop offset=".55" stop-color="#f0484e"/><stop offset="1" stop-color="#e81c24"/></radialGradient>
<linearGradient id="gTail" x1="0" y1="0" x2="0" y2="1"><stop offset="0" stop-color="#4a4a4a"/><stop offset=".5" stop-color="#2a2a2a"/><stop offset="1" stop-color="#161616"/></linearGradient>
<linearGradient id="gLeadHi" x1="0" y1="0" x2="1" y2="0"><stop offset="0" stop-color="#d0d0d0"/><stop offset=".4" stop-color="#ffffff"/><stop offset="1" stop-color="#777"/></linearGradient>
<clipPath id="cPuck"><circle cx="244.7" cy="220.7" r="73.3"/></clipPath>
<clipPath id="cBot"><rect x="1060" y="1500" width="40" height="18.1"/><rect x="1060" y="1521.9" width="40" height="20"/></clipPath>
<linearGradient id="gSel" x1="0" y1="0" x2="0" y2="1"><stop offset="0" stop-color="#ececec"/><stop offset="1" stop-color="#fcfcfc"/></linearGradient>
<linearGradient id="gPaint" x1="0" y1="0" x2="0" y2="1"><stop offset="0" stop-color="#8e8e8e"/><stop offset="1" stop-color="#646464"/></linearGradient>
<linearGradient id="gRim" x1="0" y1="0" x2="0" y2="1"><stop offset="0" stop-color="#dcdcdc"/><stop offset=".6" stop-color="#ffffff"/><stop offset="1" stop-color="#f0f0f0"/></linearGradient>
<linearGradient id="gIrisSh" x1="0" y1="0" x2="0" y2="1"><stop offset="0" stop-color="#8a1010" stop-opacity=".55"/><stop offset=".3" stop-color="#a01818" stop-opacity=".35"/><stop offset=".55" stop-color="#c02020" stop-opacity="0"/></linearGradient>
<linearGradient id="gPupil" x1="0" y1="0" x2="0" y2="1"><stop offset="0" stop-color="#a81c1c"/><stop offset="1" stop-color="#7a0000"/></linearGradient>
</defs>
<!-- top dots -->
<g fill="#c4c4c4"><circle cx="1064" cy="20" r="5"/><circle cx="1080" cy="20" r="5"/><circle cx="1096" cy="20" r="5"/></g>
<!-- list icon -->
<g>
<rect x="297.6" y="79.3" width="39" height="33.2" rx="4" fill="url(#gLight)" stroke="#707070" stroke-width="2"/>
<g fill="#6a6a6a"><circle cx="306.7" cy="87.8" r="2.1"/><circle cx="306.7" cy="96" r="2.1"/><circle cx="306.7" cy="104.3" r="2.1"/>
<rect x="313.3" y="86.9" width="15.8" height="1.9" rx=".9"/><rect x="313.3" y="95.1" width="15.8" height="1.9" rx=".9"/><rect x="313.3" y="103.4" width="15.8" height="1.9" rx=".9"/></g>
</g>
<!-- undo -->
<path d="M383.3 98 L404.9 82.7 L404.9 91.2 L420 91.2 C430 91.2 436.5 88.5 438.9 82.7 C438.5 97 431 105.1 419 105.1 L404.9 105.1 L404.9 113.3 Z" fill="#696969"/>
<!-- redo -->
<path d="M550.5 98 L528.9 82.7 L528.9 91.2 L513.8 91.2 C503.8 91.2 496 99 495 113.3 C497.4 107.5 503.8 105.1 514.8 105.1 L528.9 105.1 L528.9 113.3 Z" fill="#b9b9b9"/>
<!-- select -->
<g>
<rect x="638.4" y="83.7" width="32.7" height="24.1" fill="url(#gSel)"/>
<path d="M638.4 88.6 V83.7 H643.6 M648 83.7 H654.1 M656.4 83.7 H661.9 M666.2 83.7 H671.1 V88.6 M638.4 93.2 V98.7 M671.1 93.2 V98.7 M638.4 103.3 V107.8 H643.6 M648 107.8 H654.1 M656.4 107.8 H662.2 M671.1 103.3 V105.5" fill="none" stroke="#454545" stroke-width="2"/>
<path d="M662.2 95.3 L679.3 110.2 L669.6 111.8 L662.2 119.5 Z" fill="url(#gDark)"/>
</g>
<!-- move -->
<g fill="url(#gMove)">
<path d="M761.9 78.4 L767.9 84.8 L764 84.8 L764 97 L776.2 97 L776.2 93.1 L782.6 99.1 L776.2 105.1 L776.2 101.2 L764 101.2 L764 113.4 L767.9 113.4 L761.9 119.8 L755.9 113.4 L759.8 113.4 L759.8 101.2 L747.6 101.2 L747.6 105.1 L741.2 99.1 L747.6 93.1 L747.6 97 L759.8 97 L759.8 84.8 L755.9 84.8 Z"/>
</g>

<!-- bucket -->
<g>
<path d="M853.3 82 L853.3 117 C853.3 124 887.3 124 887.3 117 L887.3 82 Z" fill="url(#gBucket)" stroke="#8a8a8a" stroke-width="1.8"/>
<path d="M862 111.6 C868 111 872 106.3 878 106.3 C882 106.3 884.5 107 886.4 107.6 V115 H862 Z" fill="#b7b7b7"/>
<path d="M854.2 110.6 C858 110.5 862 110.9 866 112 C871 113.6 875 114.9 879 114.5 C882 114.1 884.5 112.8 886.4 112.2 V117 C886.4 123.2 854.2 123.2 854.2 117 Z" fill="url(#gPaint)"/>
<ellipse cx="870.3" cy="81.7" rx="16.9" ry="3.3" fill="url(#gRim)" stroke="#8a8a8a" stroke-width="2.3"/>
<path d="M860.3 91.2 C850 93.5 844 104.5 853.6 110.2" fill="none" stroke="#5e5e5e" stroke-width="2.1"/>
<ellipse cx="860.4" cy="91" rx="1.7" ry="3.1" fill="#5a5a5a"/>
</g>
<!-- ruler -->
<g>
<ellipse cx="976.2" cy="98.3" rx="17.2" ry="21.2" transform="rotate(-16 976.2 98.3)" fill="none" stroke="#6e6e6e" stroke-width="2" stroke-dasharray="3.8 4.3"/>
<g transform="translate(977.3 99.3) rotate(-44.6)">
<rect x="-24.2" y="-7.1" width="48.4" height="14.2" rx="1.5" fill="url(#gLight)" stroke="#4e4e4e" stroke-width="2.2"/>
<g stroke="#555" stroke-width="1.7"><path d="M-18.2 -6.5 v4.6 M-13 -6.5 v3.4 M-7.8 -6.5 v4.6 M-2.6 -6.5 v3.4 M2.6 -6.5 v4.6 M7.8 -6.5 v3.4 M13 -6.5 v4.6 M18.2 -6.5 v3.4"/></g>
</g>
</g>
<!-- symmetry -->
<g fill="none" stroke-linecap="round">
<path d="M1079.9 76.8 V121.3" stroke="#5e5e5e" stroke-width="1.9" stroke-dasharray="7.5 4.7" stroke-linecap="butt"/>
<path id="symL" d="M1071.3 79.2 C1061 79.6 1056.8 83.5 1056.8 87.8 C1056.8 93.5 1071.8 93.3 1071.8 98.8 C1071.8 104.3 1056.8 104.5 1056.8 110.4 C1056.8 114.6 1061 118.2 1071.3 118.6" stroke="url(#gSym)" stroke-width="2"/>
<path d="M1088.5 79.2 C1098.8 79.6 1103 83.5 1103 87.8 C1103 93.5 1088 93.3 1088 98.8 C1088 104.3 1103 104.5 1103 110.4 C1103 114.6 1098.8 118.2 1088.5 118.6" stroke="url(#gSym)" stroke-width="2"/>
<path d="M1056.8 87.8 C1056.8 93.5 1071.3 93.3 1071.3 98.8 C1071.3 104.3 1056.8 104.5 1056.8 110.4" stroke="url(#gSym2)" stroke-width="4.6" stroke-linecap="butt"/>
<path d="M1103 87.8 C1103 93.5 1088.5 93.3 1088.5 98.8 C1088.5 104.3 1103 104.5 1103 110.4" stroke="url(#gSym2)" stroke-width="4.6" stroke-linecap="butt"/>
</g>
<!-- shapes -->
<g>
<rect x="1166.4" y="94.1" width="24.6" height="24" fill="url(#gLight)" stroke="#555" stroke-width="2"/>
<circle cx="1192.1" cy="92.5" r="13.3" fill="url(#gLight)" fill-opacity=".75" stroke="#666" stroke-width="1.7"/>
<path d="M1178.8 94.1 H1191 V105.7" fill="none" stroke="#555" stroke-width="2"/>
</g>
<!-- curve -->
<path d="M1270.6 114.6 C1276 113.8 1279.5 112.8 1282 111.1 C1285 109 1286.6 106.6 1287.6 104.4 C1288.8 101.8 1289.5 99 1290.3 96.5 C1291 94.2 1291.8 92.2 1293.1 90.2 C1294.5 88.3 1296.3 86.9 1298.6 85.9 C1300.8 84.9 1303.2 84.3 1305.7 83.9 C1308.2 83.5 1310.9 83.3 1313.5 83.3 C1311.2 83.6 1309.1 84 1307.2 84.7 C1304.8 85.5 1302.7 86.5 1300.9 87.8 C1299 89.3 1297.6 91.2 1296.6 93.3 C1295.6 95.3 1295 97.5 1294.3 99.6 C1293.5 102 1292.7 104.5 1291.5 106.7 C1290.2 108.9 1288.4 110.8 1286 112.2 C1283.9 113.5 1281.5 114.3 1278.9 114.8 C1276.2 115.2 1273.4 115.1 1270.6 114.6 Z" fill="#6e6e6e"/>
<!-- add image -->
<g>
<path d="M1399.6 88 H1376.7 V116.2 H1419.3 V97" fill="url(#gLight)" stroke="#6a6a6a" stroke-width="2.2" stroke-linejoin="round"/>
<path d="M1377.8 115.2 V111.5 L1390.6 98.6 L1401.9 111 L1409.5 105.2 L1418.2 111.5 V115.2 Z" fill="url(#gDark2)"/>
<path d="M1412.2 80.7 V97 M1404.1 88.9 H1420.4" stroke="#666" stroke-width="4.6" stroke-linecap="butt" fill="none"/>
</g>
<!-- perspective grid -->
<g fill="url(#gLight)" stroke="#6c6c6c" stroke-width="1.8" stroke-linejoin="round">
<path d="M1503.9 77 L1527.9 93.1 V115.6 L1503.9 122 L1479.9 115.6 V93.1 Z"/>
<path d="M1503.9 77 V122 M1491.8 85.2 V118.7 M1516.1 85.2 V118.7 M1479.9 98.5 L1503.9 87.5 L1527.9 98.5 M1479.9 104.1 L1503.9 98.7 L1527.9 104.1 M1479.9 110 H1527.9" fill="none"/>
</g>
<!-- T -->
<text x="1610.5" y="119.3" font-family="Liberation Serif, serif" font-size="63" fill="#6e6e6e" text-anchor="middle">T</text>
<!-- camera -->
<g>
<rect x="1690" y="83.9" width="34" height="28" rx="4.5" fill="url(#gCam)"/>
<circle cx="1699.1" cy="92.8" r="5" fill="#f4f4f4"/>
<path d="M1729 93.6 L1737.6 87.2 Q1739.2 86.3 1739.2 88.2 V105.8 Q1739.2 107.7 1737.6 106.8 L1729 101 Z" fill="url(#gLight)" stroke="#6a6a6a" stroke-width="1.6" stroke-linejoin="round"/>
</g>
<!-- fullscreen -->
<g>
<rect x="1822.8" y="83" width="40.3" height="29.8" rx="4" fill="url(#gLight)" stroke="#797979" stroke-width="2"/>
<path d="M1833.5 86.7 H1852.3 M1827.1 88 V108.8 M1859 88 V108.8" stroke="#797979" stroke-width="1.8" stroke-linecap="round" fill="none"/>
</g>
<!-- size icon -->
<g fill="#6a6a6a">
<path d="M51 283.9 L54.7 290.6 H47.4 Z"/>
<path d="M46.3 293.1 H55.6 L61.1 304.5 V308.7 H41 V304.5 Z"/>
<rect x="28.9" y="318.9" width="44.1" height="4" rx="2"/>
<circle cx="43.9" cy="320.9" r="5.9"/>
</g>
<!-- 1 pencil -->
<g>
<ellipse cx="52" cy="444" rx="17" ry="2.6" fill="#000" opacity=".28" filter="url(#blur2)"/>
<path d="M47.2 393 L56.5 393 L66.9 424.5 L37 424.5 Z" fill="url(#gWood)"/>
<path d="M47.2 393 L50.9 382.4 Q51.9 380.4 52.9 382.4 L56.5 393 Z" fill="#0c0c0c"/><path d="M51.5 382.2 Q52 381.6 52.5 382.4 L51.6 393 L49.3 393 Z" fill="url(#gLeadHi)"/>
<path d="M37 423.8 Q40.6 418.8 44.8 426.2 Q51.8 415.4 58.7 426.2 Q63 418.8 66.9 423.8 V442.8 H37 Z" fill="url(#gBlk3)"/>
<rect x="37" y="433" width="29.9" height="6.1" fill="url(#gGold3)"/>
</g>
<!-- 2 marker -->
<g>
<ellipse cx="50" cy="551.5" rx="24" ry="2.6" fill="#000" opacity=".3" filter="url(#blur2)"/>
<path d="M41.6 501.7 H46.8 L58.2 507.5 V520.7 H41.6 Z" fill="url(#gNib)" stroke="#555" stroke-width="1.3" stroke-linejoin="round"/>
<path d="M41.1 520.7 H58.7 L62.5 526.9 H38 Z" fill="url(#gGoldM)"/>
<path d="M38 526.9 L35.6 527 L31.6 537 H68.6 L64.5 527 L62.5 526.9 Z" fill="url(#gGoldM)"/>
<path d="M39 524.3 H61 L62.5 526.9 H38 Z" fill="#6a6a60" opacity=".75"/>
<path d="M52.8 520.7 H54.8 L60.6 537 H53.4 Z" fill="#1e2a36"/>
<rect x="32.2" y="534.6" width="35.8" height="1.6" fill="#a8842e" opacity=".8"/>
<path d="M32.6 537 H67.9 L71.3 542.8 H29.2 Z" fill="url(#gGrayH)"/>
<rect x="27.2" y="542.8" width="45.6" height="7.8" fill="url(#gGrayH)"/>
<rect x="27.2" y="542.9" width="45.6" height="1.7" fill="#d9d9d9"/>
<rect x="29" y="545.2" width="42.5" height="1.5" fill="#111"/>
</g>
<!-- 3 airbrush -->
<g>
<ellipse cx="50" cy="659.5" rx="24" ry="2.6" fill="#000" opacity=".3" filter="url(#blur2)"/>
<path d="M43.1 598 H56.7 L58.4 609.2 H41.8 Z" fill="url(#gGoldA)"/>
<rect x="43.1" y="598" width="13.6" height="1" fill="#333"/>
<rect x="39" y="609.2" width="21.8" height="3.1" rx=".6" fill="url(#gSilverV)"/>
<path d="M41.4 612.3 H58.1 L60.4 619 H39.7 Z" fill="url(#gGoldA)"/>
<rect x="37.2" y="619" width="25.3" height="3.1" rx=".6" fill="url(#gSilverV)"/>
<path d="M38.7 622.1 H61.1 C66 627 69.5 633 71 639.1 H29.2 C30.5 633 34 627 38.7 622.1 Z" fill="url(#gGoldA)"/>
<path d="M38.7 622.1 C34 627 30.5 633 29.2 639.1 H31.6 C33 633 36 627 40.6 622.1 Z" fill="#1a1a1a"/>
<rect x="27.2" y="639.1" width="45.8" height="4" fill="url(#gSilverV)"/>
<rect x="27.2" y="643.1" width="45.8" height="15.7" fill="url(#gBaseA)"/>
<rect x="29" y="643.1" width="42.5" height="1.3" fill="#0c0c0c"/>
<g clip-path="url(#cAir)"><circle cx="50" cy="662" r="13" fill="#1c1c1c" stroke="#5a5c5e" stroke-width="2"/><circle cx="50" cy="662" r="8.5" fill="#cfcfcf"/><rect x="47" y="650" width="6" height="9" fill="#444"/><rect x="45.5" y="655.2" width="9" height="1.5" fill="#eee"/></g>
</g>
<!-- 4 pen (selected) -->
<g id="pen">
<ellipse cx="52" cy="767.5" rx="17" ry="2.4" fill="#000" opacity=".25" filter="url(#blur2)"/>
<path d="M37 759.1 L42.6 723 Q42.8 722.5 43.6 722.5 H60.4 Q61.2 722.5 61.4 723 L66.9 759.1 V766.9 H37 Z" fill="url(#gPenBody)"/>
<path d="M43 742 H61 M42.5 746 H61.5 M42 750 H62 M41.5 754 H62.5 M44 728 H60 M43.6 732 H60.4" stroke="#3a3a3a" stroke-opacity=".17" stroke-width="1.6" fill="none"/>
<rect x="37" y="755.4" width="29.9" height="3.7" fill="url(#gSilverH)" opacity=".9"/>
<rect x="37" y="759.1" width="29.9" height="5.9" fill="url(#gGold3)"/>
<rect x="37" y="765" width="29.9" height="1.9" fill="url(#gSilverH)"/>
<rect x="46.9" y="719" width="10.1" height="3.8" fill="url(#gStep)"/>
<rect x="48.9" y="715" width="6.1" height="4" fill="url(#gGoldS)"/>
<rect x="49.3" y="713.3" width="5.3" height="1.8" fill="#333"/>
<rect x="49.9" y="707.6" width="4.1" height="5.8" fill="url(#gTube)"/>
<path d="M50.9 707.8 V705.6 Q51.9 704.6 52.9 705.6 V707.8 Z" fill="#111"/>
</g>
<!-- 5 fountain pen -->
<g>
<ellipse cx="52" cy="876.3" rx="12.5" ry="2.2" fill="#000" opacity=".28" filter="url(#blur2)"/>
<path d="M52.3 811.6 C55 819 60.8 826.5 60.8 834 C60.8 841 59.2 848 58.7 855.4 H44.8 C44.4 848 42.9 841 42.9 834 C42.9 826.5 49.6 819 52.3 811.6 Z" fill="url(#gGoldN)"/>
<path d="M52.3 812.8 V843.5" stroke="#3a3a3a" stroke-width="1.2"/><circle cx="52.3" cy="844.3" r="1.6" fill="#444"/>
<rect x="44.8" y="855" width="13.9" height="1.6" fill="#6c7076"/>
<path d="M44.8 856.6 H58.7 C59 859 61 860 63 860.8 H40.8 C42.8 860 44.6 859 44.8 856.6 Z" fill="url(#gGoldA)"/>
<rect x="40.7" y="859.8" width="22.4" height="1.8" fill="#d8d8d8"/>
<rect x="40.7" y="861.4" width="22.4" height="14.2" rx=".8" fill="url(#gBaseF)"/>
</g>
<!-- 6 brush -->
<g>
<ellipse cx="51" cy="983.5" rx="13.5" ry="2.2" fill="#000" opacity=".3" filter="url(#blur2)"/>
<path d="M50.9 929 C56 936 60.3 942 60.1 949.5 C59.9 955 57.8 959 56.7 962.8 H44.5 C43.6 959 41.6 955 41.7 949.5 C41.8 942 46 936 50.9 929 Z" fill="url(#gBristle)"/>
<path d="M50.9 931 C50 940 49 948 50 960 M48 936 C46 944 45 950 46.5 960 M54 936 C55.5 944 56 950 55 960" stroke="#9a6a3c" stroke-opacity=".55" stroke-width="1" fill="none"/>
<path d="M50.9 929 C56 936 60.3 942 60.1 949.5 C59.9 955 57.8 959 56.7 962.8 H44.5 C43.6 959 41.6 955 41.7 949.5 C41.8 942 46 936 50.9 929 Z" fill="url(#gBristleV)"/>
<path d="M43.5 962.5 H58.4 L61.5 975 H40.4 Z" fill="url(#gFerrule)"/>
<rect x="52.2" y="964.8" width="2.4" height="9.8" fill="#1c2a38"/>
<rect x="39" y="975" width="23.8" height="7.8" fill="url(#gGrayH)"/>
<rect x="39" y="975" width="23.8" height="1.8" fill="#d6d6d6"/>
<rect x="40.8" y="977.2" width="20.5" height="1.4" fill="#111"/>
</g>
<!-- 7 brush pen -->
<g>
<ellipse cx="52" cy="1091.8" rx="14.5" ry="2.4" fill="#000" opacity=".32" filter="url(#blur2)"/>
<path d="M52.3 1025.2 C55 1034 58.9 1043 58.7 1051 C58.6 1054 58.3 1055.5 58 1057.2 H46.5 C46.1 1055.5 45.8 1054 45.8 1051 C45.8 1043 49.8 1034 52.3 1025.2 Z" fill="url(#gBristle2)"/>
<path d="M44.8 1058.3 Q44.8 1056.9 46.4 1056.9 H58.2 Q59.8 1056.9 59.8 1058.3 L63.5 1067.1 H40.7 Z" fill="url(#gBlkCone)"/>
<path d="M53.2 1058 H55.2 L56.6 1067 H54 Z" fill="#fff" opacity=".85"/>
<rect x="46" y="1056.9" width="12.6" height="1.2" fill="#8a8f96" opacity=".8"/>
<rect x="39" y="1067.1" width="25.8" height="23.8" rx="1.2" fill="url(#gBlkBody)"/>
<rect x="40.7" y="1066.8" width="22.8" height=".9" fill="#b9bcc0"/>
<rect x="39" y="1081" width="25.8" height="6.2" fill="url(#gGoldB)"/>
</g>
<!-- 8 eraser -->
<g id="erbase">
<ellipse cx="51" cy="1199.8" rx="23" ry="2.6" fill="#000" opacity=".3" filter="url(#blur2)"/>
<rect x="30.9" y="1168.9" width="40.1" height="4.3" fill="url(#gGoldE)"/>
<rect x="29.2" y="1173" width="43.8" height="1.8" fill="#c9c9c9"/>
<rect x="29.2" y="1174.7" width="43.8" height="24.1" fill="url(#gBaseE)"/>
<path d="M35 1177.2 H55 V1180.8 L49 1183.8 V1188 L55 1190.6 V1192.4 L49 1195.4 V1198.8 H41 V1195.4 L35 1192.4 V1190.6 L41 1188 V1183.8 L35 1180.8 Z" fill="url(#gIvory)"/>
<path d="M61.1 1180.1 H72.4 M61.1 1183.9 H72.4 M61.1 1187.9 H72.4 M61.1 1192 H72.4 M61.1 1196 H72.4" stroke="#a07c34" stroke-width="1.7" fill="none"/>
</g>
<path d="M32.9 1168.9 V1154.5 Q32.9 1150.9 36.5 1150.9 H65.3 Q68.9 1150.9 68.9 1154.5 V1168.9 Z" fill="url(#gErTop)" stroke="#bdb8ac" stroke-width=".9"/>
<!-- 9 smudge -->
<g>
<ellipse cx="51" cy="1308.3" rx="13.5" ry="2.2" fill="#000" opacity=".28" filter="url(#blur2)"/>
<path d="M50.9 1251.6 C55 1259 61.5 1274 62.8 1290.2 H39.4 C40.5 1274 47 1259 50.9 1251.6 Z" fill="url(#gSmudge)"/>
<path d="M48 1259 L54.4 1257.8 M46.6 1262.6 L55.8 1261 M45.4 1266.2 L57 1264.3 M44.3 1269.8 L58.2 1267.7 M43.3 1273.4 L59.3 1271.1 M42.4 1277 L60.2 1274.6 M41.6 1280.6 L61 1278.2 M40.8 1284.2 L61.7 1281.8 M41 1288.6 L62 1283.6" stroke="#a9a69c" stroke-width=".9" fill="none" opacity=".8"/>
<rect x="39.4" y="1290.1" width="23.4" height="2.2" fill="#c99a3c"/>
<rect x="39.4" y="1290.1" width="3" height="2.4" fill="#1a1a1a"/><rect x="51" y="1290.1" width="2.6" height="2.4" fill="#1a1a1a"/><rect x="61.6" y="1290.1" width="1.2" height="2.4" fill="#1a1a1a"/>
<rect x="38.7" y="1292.1" width="24.1" height="15.3" rx=".8" fill="url(#gBaseF)"/>
<rect x="40.2" y="1293.3" width="21" height="1.8" rx=".9" fill="#e8e8ec"/>
</g>
<!-- 10 chisel eraser -->
<use href="#erbase" y="216"/>
<path d="M32.9 1384.8 V1376.2 Q32.9 1373.6 35.6 1372.6 L64.2 1361.6 Q68.2 1360.2 68.2 1364.4 V1384.8 Z" fill="url(#gChisel)" stroke="#b5b1a8" stroke-width=".9"/>
<!-- plus -->
<path d="M2053.4 303 H2086.4 M2069.9 286.4 V319.5" stroke="#7a7a7a" stroke-width="4" stroke-linecap="round" fill="none"/>
<!-- layer1 thumb content -->
<g clip-path="url(#cThumb1)">
<path d="M2023.3 959.4 C2024.2 955.5 2025.8 953 2028.3 950.6 C2031 947.6 2034 944.5 2037.8 942.2 C2041.2 940 2044.8 938.4 2048.9 937.2 C2054 935.7 2059.8 934.4 2065.6 933.3 C2071 932.3 2076.6 931.5 2082.2 930.8 C2087.6 930.2 2093.4 929.8 2098.9 930 C2102.4 930.1 2105.6 930.4 2107.8 931.7 C2110.6 933.2 2112.2 935.6 2112.8 938.3 C2113.3 939.8 2113.5 941.3 2113.3 942.8 C2113.2 945.2 2112.7 947.4 2111.7 949.4 C2110.6 951.6 2109 953.6 2106.7 955 C2104.5 956.3 2101.8 956.9 2098.9 957.2 C2093.4 957.7 2087.8 957.9 2082.2 958.3 C2076.6 958.8 2071 959.5 2065.6 960.3 C2059.9 961.2 2054.4 962.2 2048.9 963.3 C2045.1 964.1 2041.4 965 2037.8 966.1 C2035.5 966.8 2033.3 967.8 2031.1 968.1 C2029.4 968.3 2027.9 967.3 2026.7 966.1 C2025.3 964.8 2024.1 963.6 2023.6 962.2 C2023.3 961.3 2023.2 960.3 2023.3 959.4 Z" fill="url(#gEyeW)" filter="url(#blur05)"/>
<g clip-path="url(#cEyeW)">
<circle cx="2057.2" cy="947" r="19.2" fill="url(#gIris)"/>
<circle cx="2057.2" cy="947" r="19.2" fill="url(#gIrisSh)"/>
<path d="M2052.2 937.2 L2061.2 939.8 L2056.7 951.8 Z" fill="url(#gPupil)" filter="url(#blur05)"/>
<path d="M2057 939.3 L2074 936.5" stroke="#fff" stroke-width="2.5" stroke-linecap="round" filter="url(#blur05)"/>
</g>
<path d="M2024 963 C2021.6 970 2021.6 978 2022.5 985.5 C2023.6 978 2026.5 971.5 2031 968.2 C2028 968.2 2025.5 966 2024 963 Z" fill="url(#gTail)" filter="url(#blur05)"/>
</g>
<!-- eye slash -->
<g>
<path d="M1997.6 890.8 C2003 883.7 2008 880.7 2013.2 880.7 C2018.4 880.7 2023.4 883.7 2028.6 890.8 C2023.4 897.9 2018.4 900.8 2013.2 900.8 C2008 900.8 2003 897.9 1997.6 890.8 Z" fill="#8c8c8c"/>
<circle cx="2013.2" cy="890.8" r="8.3" fill="#fff"/><circle cx="2013.2" cy="890.9" r="4.2" fill="#8c8c8c"/>
<path d="M2022.4 876.4 L1997.6 901.6" stroke="#fff" stroke-width="2.6"/>
<path d="M2023 879.3 L2000.7 902.1" stroke="#8c8c8c" stroke-width="2.3" stroke-linecap="round"/>
</g>
<!-- eye 2 -->
<g id="eye" transform="translate(0 0)">
<path d="M1997.6 1066.8 C2003 1059.5 2008 1056.6 2013.2 1056.6 C2018.4 1056.6 2023.4 1059.5 2028.8 1066.8 C2023.4 1074.1 2018.4 1077 2013.2 1077 C2008 1077 2003 1074.1 1997.6 1066.8 Z" fill="#8c8c8c"/>
<circle cx="2013.2" cy="1066.8" r="8.3" fill="#fff"/><circle cx="2013.2" cy="1066.8" r="4.4" fill="#8c8c8c"/>
</g>
<use href="#eye" y="176"/>
<!-- layer 2 thumb -->
<g clip-path="url(#cThumb2)"><use href="#dr" transform="translate(1879.4 974.3) scale(0.18 0.181)"/></g>
<!-- lock -->
<g>
<path d="M2006 1179.5 V1173.4 Q2006 1168.9 2010.5 1168.9 H2013.6 Q2018.1 1168.9 2018.1 1173.4 V1174.8" fill="none" stroke="#8c8c8c" stroke-width="3.8"/>
<rect x="2002" y="1179.1" width="19.9" height="15.7" fill="#8c8c8c"/>
<g fill="#fff"><rect x="2007.9" y="1180.9" width="4.2" height="4.2"/><rect x="2015.9" y="1180.9" width="4.2" height="4.2"/><rect x="2004" y="1185.1" width="3.9" height="4"/><rect x="2012.1" y="1185.1" width="3.8" height="4"/><rect x="2007.9" y="1189.1" width="4.2" height="4"/><rect x="2015.9" y="1189.1" width="4.2" height="4"/></g>
</g>
<!-- bg layer circle -->
<circle cx="2110.4" cy="1269.7" r="38.8" fill="#fff" fill-opacity=".6" stroke="#e4e4e4" stroke-width="1.8"/>
<!-- bottom center icon -->
<g clip-path="url(#cBot)">
<circle cx="1080" cy="1520" r="12.85" fill="none" stroke="#bbbbbb" stroke-width="6.7"/>
<circle cx="1080" cy="1520" r="8.6" fill="none" stroke="#fff" stroke-width="2"/>
</g>
<!-- pen in puck -->
<g clip-path="url(#cPuck)"><use href="#pen" transform="translate(187.55 -551.2) scale(1.107)"/></g>
<!-- 4.1 glyphs -->
<g fill="none" stroke="#0a0a0a" stroke-width="1.65" stroke-linejoin="bevel">
<path d="M238.5 179.9 V164.9 L230.9 175.55 H241.3"/>
<path d="M255.4 179.9 V164.3"/>
<path d="M250.8 168.3 C253.2 168 254.7 166.8 255.2 164.4" stroke-width="1.5"/>
</g>
<rect x="243.9" y="178.1" width="1.9" height="1.8" fill="#0a0a0a"/>

</svg>
</body></html>
